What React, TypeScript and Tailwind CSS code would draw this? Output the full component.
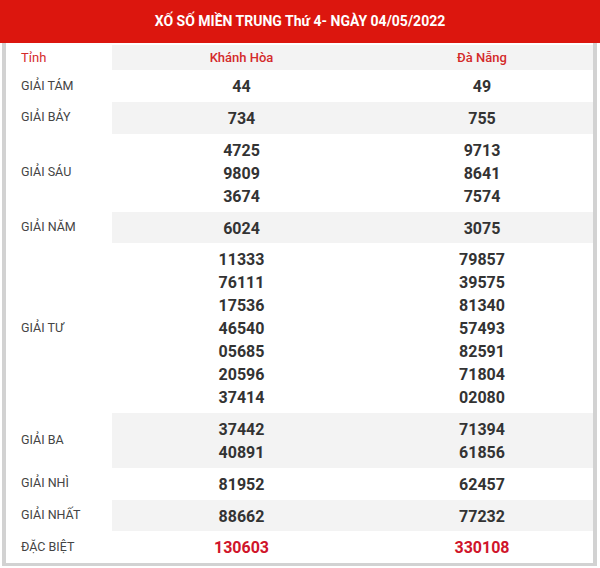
const rows: { label: string; a: string[]; b: string[]; shade?: boolean; special?: boolean }[] = [
  { label: 'GIẢI TÁM', a: ['44'], b: ['49'] },
  { label: 'GIẢI BẢY', a: ['734'], b: ['755'], shade: true },
  { label: 'GIẢI SÁU', a: ['4725', '9809', '3674'], b: ['9713', '8641', '7574'] },
  { label: 'GIẢI NĂM', a: ['6024'], b: ['3075'], shade: true },
  {
    label: 'GIẢI TƯ',
    a: ['11333', '76111', '17536', '46540', '05685', '20596', '37414'],
    b: ['79857', '39575', '81340', '57493', '82591', '71804', '02080'],
  },
  { label: 'GIẢI BA', a: ['37442', '40891'], b: ['71394', '61856'], shade: true },
  { label: 'GIẢI NHÌ', a: ['81952'], b: ['62457'] },
  { label: 'GIẢI NHẤT', a: ['88662'], b: ['77232'], shade: true },
  { label: 'ĐẶC BIỆT', a: ['130603'], b: ['330108'], special: true },
];

function Cell({ nums, shade, special }: { nums: string[]; shade?: boolean; special?: boolean }) {
  return (
    <div
      className={`flex flex-col items-center pt-[6px] pb-[3px] ${shade ? 'bg-[#f3f3f3]' : ''}`}
    >
      {nums.map((n) => (
        <span
          key={n}
          className={`text-[16px] leading-[22.9px] font-bold ${special ? 'text-[#d0142a]' : 'text-[#333]'}`}
        >
          {n}
        </span>
      ))}
    </div>
  );
}

export default function App() {
  return (
    <div className="w-[600px] h-[568px] bg-white" style={{ fontFamily: 'Roboto, "Liberation Sans", sans-serif' }}>
      <div className="h-[43px] bg-[#dc160e] flex items-center justify-center">
        <h1 className="text-white font-bold text-[14px]">XỐ SỐ MIỀN TRUNG Thứ 4- NGÀY 04/05/2022</h1>
      </div>
      <div className="pl-[2px] pr-[3px]">
        <div className="border-l-4 border-r-4 border-b-[3px] border-[#d2d2d2] pt-[2px]">
          <div className="grid grid-cols-[106px_259px_1fr] h-[25px] items-stretch">
            <div className="pl-[15px] flex items-center text-[13px] text-[#d42a2a]">Tỉnh</div>
            <div className="bg-[#f3f3f3] flex items-center justify-center text-[13px] font-medium text-[#d42a2a]">
              Khánh Hòa
            </div>
            <div className="bg-[#f3f3f3] flex items-center justify-center text-[13px] font-medium text-[#d42a2a]">
              Đà Nẵng
            </div>
          </div>
          {rows.map((r) => (
            <div key={r.label} className="grid grid-cols-[106px_259px_1fr]">
              <div className="pl-[15px] flex items-center text-[12.5px] text-[#444]">{r.label}</div>
              <Cell nums={r.a} shade={r.shade} special={r.special} />
              <Cell nums={r.b} shade={r.shade} special={r.special} />
            </div>
          ))}
        </div>
      </div>
    </div>
  );
}
